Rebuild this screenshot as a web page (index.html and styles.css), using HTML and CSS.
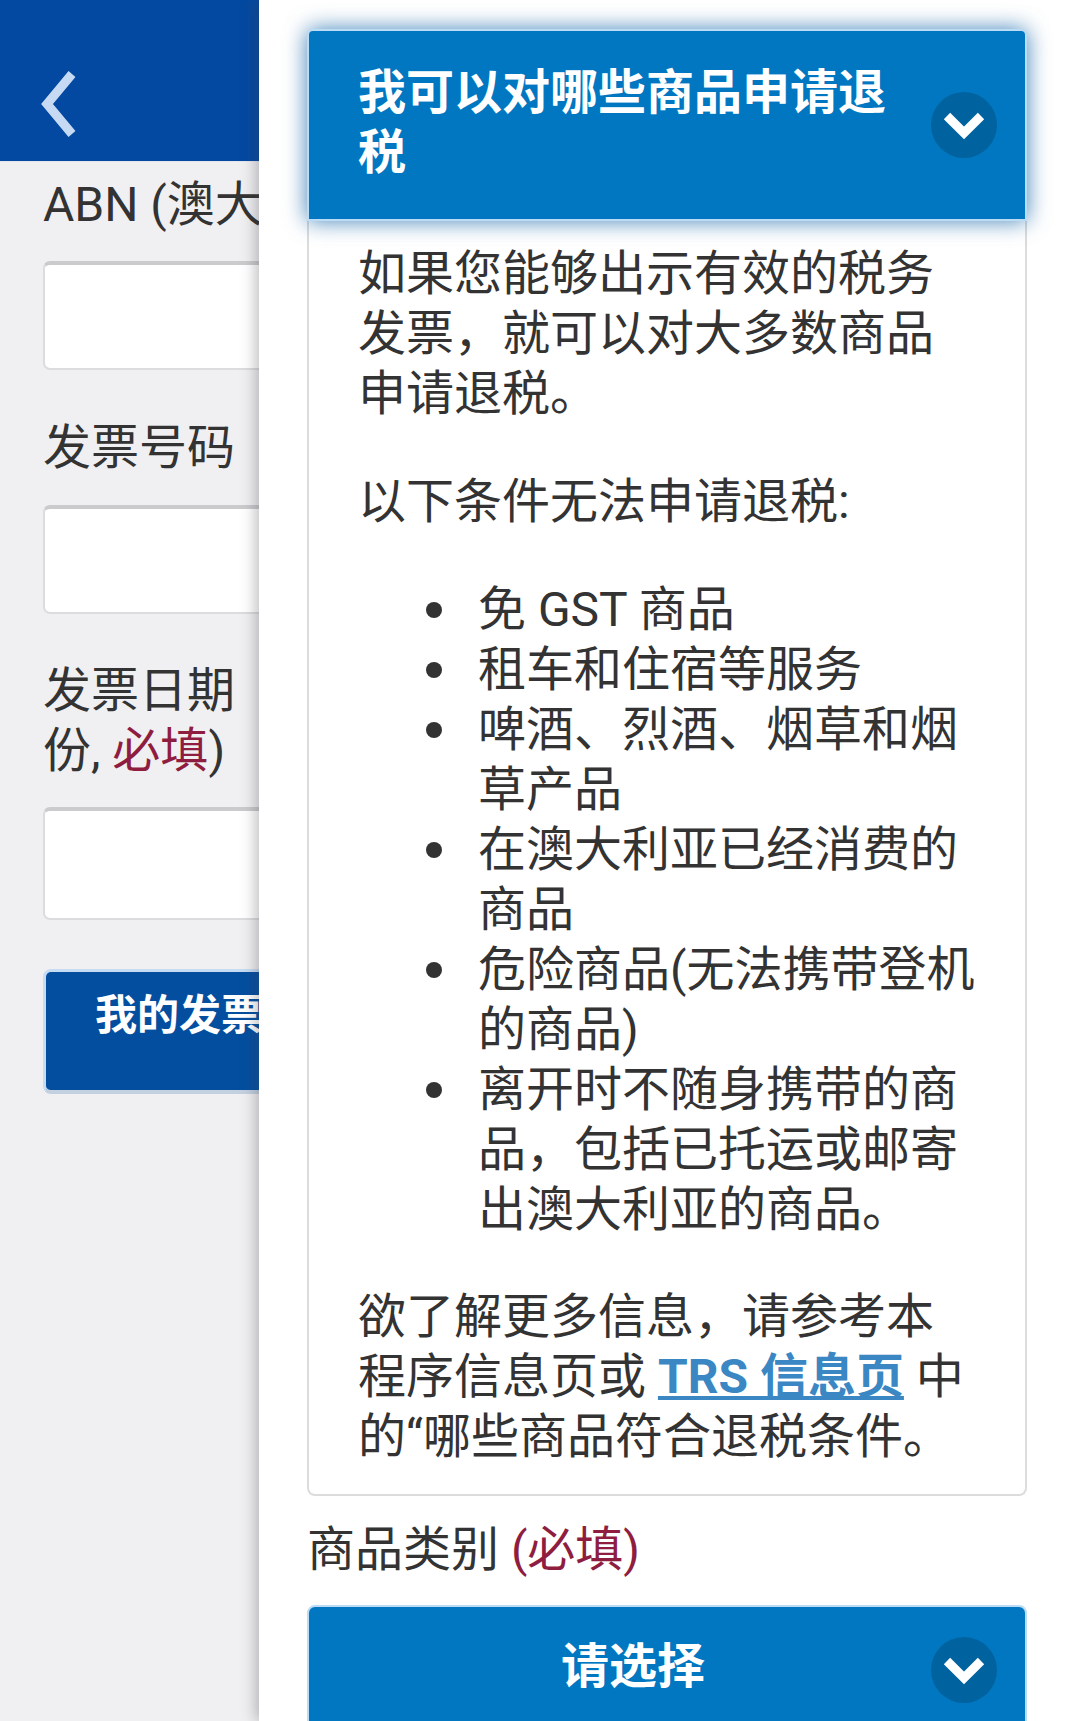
FILE: index.html
```html
<!DOCTYPE html>
<html lang="zh-CN">
<head>
<meta charset="utf-8">
<title>退税申请</title>
<link rel="stylesheet" href="styles.css">
</head>
<body>
<div class="app">
  <section class="form-view">
    <header class="topbar">
      <svg class="back" width="42" height="74" viewBox="0 0 42 74"><polyline points="35,7 10,37 35,67"/></svg>
    </header>
    <div class="form">
      <div class="label nowrap">ABN (澳大</div>
      <div class="input"></div>
      <div class="label">发票号码</div>
      <div class="input"></div>
      <div class="label">发票日期<br>份, <span class="req">必填</span>)</div>
      <div class="input input-tall"></div>
      <div class="btn">我的发票</div>
    </div>
  </section>
  <main class="panel">
    <article class="card">
      <div class="card-head">
        <h2 class="card-title">我可以对哪些商品申请退税</h2>
        <span class="round"><svg class="chev" width="44" height="30" viewBox="0 0 44 30"><polyline points="5,6 22,23 39,6"/></svg></span>
      </div>
      <div class="card-body">
        <p>如果您能够出示有效的税务发票，就可以对大多数商品申请退税。</p>
        <p>以下条件无法申请退税:</p>
        <ul>
          <li>免 GST 商品</li>
          <li>租车和住宿等服务</li>
          <li>啤酒、烈酒、烟草和烟草产品</li>
          <li>在澳大利亚已经消费的商品</li>
          <li>危险商品(无法携带登机的商品)</li>
          <li>离开时不随身携带的商品，包括已托运或邮寄出澳大利亚的商品。</li>
        </ul>
        <p>欲了解更多信息，请参考本程序信息页或 <a href="#">TRS 信息页</a> 中的“哪些商品符合退税条件。</p>
      </div>
    </article>
    <div class="label cat-label">商品类别 <span class="req">(必填)</span></div>
    <div class="select">
      <span class="select-text">请选择</span>
      <span class="round"><svg class="chev" width="44" height="30" viewBox="0 0 44 30"><polyline points="5,6 22,23 39,6"/></svg></span>
    </div>
  </main>
</div>
</body>
</html>
```
FILE: styles.css
```css
* { box-sizing: border-box; }
html, body { margin: 0; padding: 0; }
body {
  width: 1075px;
  height: 1721px;
  overflow: hidden;
  background: #f0f0f2;
  color: #333;
  font-family: Roboto, "Noto Sans CJK SC", sans-serif;
  font-size: 48px;
  line-height: 60px;
}
.app { display: flex; height: 1721px; }

.form-view { width: 259px; flex: none; overflow: hidden; }
.topbar {
  height: 162px;
  background: #0449a1;
  padding: 67px 0 0 37px;
  border-bottom: 1px solid #e4e6ec;
}
.back { display: block; fill: none; stroke: #c7daf3; stroke-width: 9; }
.form { width: 500px; padding: 13px 0 0 43px; }
.label { color: #333; }
.nowrap { white-space: nowrap; }
.req { color: #8f1d3f; }
.input {
  height: 109px;
  margin: 26px 0 48px;
  background: #fff;
  border: 2px solid #dcdcdf;
  border-top: 4px solid #cbcbce;
  border-radius: 7px;
}
.input + .label + .input { margin-top: 27px; margin-bottom: 47px; }
.input + .label + .input.input-tall { height: 113px; margin-top: 26px; margin-bottom: 49px; }
.btn {
  height: 125px;
  padding: 14px 0 0 49px;
  background: #044ea0;
  border: 3px solid #c5dcf4;
  border-bottom: 4px solid #c3d0e0;
  border-radius: 8px;
  color: #fff;
  font-size: 42px;
  font-weight: 700;
  white-space: nowrap;
}

.panel {
  flex: 1;
  position: relative;
  z-index: 1;
  background: #fff;
  box-shadow: -3px 0 14px rgba(60, 60, 70, 0.35);
  padding: 29px 48px 0 48px;
  overflow: hidden;
}
.card { background: #fff; }
.card-head {
  position: relative;
  display: flex;
  align-items: center;
  height: 192px;
  padding: 0 28px 0 49px;
  background: #0077c0;
  border: 2px solid #bcdcf5;
  border-radius: 6px 6px 0 0;
  box-shadow: 0 0 22px rgba(0, 90, 160, 0.75);
}
.card-title {
  flex: 1;
  margin: 0 24px 4px 0;
  color: #fff;
  font-size: 48px;
  line-height: 60px;
  font-weight: 700;
}
.round {
  display: flex;
  flex: none;
  align-items: center;
  justify-content: center;
  width: 66px;
  height: 66px;
  border-radius: 50%;
  background: #00629f;
}
.chev { display: block; fill: none; stroke: #fff; stroke-width: 9; }
.card-body {
  padding: 23px 50px 27px 49px;
  border: 2px solid #dcdcdc;
  border-top: 0;
  border-radius: 0 0 8px 8px;
}
.card-body p { margin: 0 0 48px; }
.card-body p:last-child { margin: 0; }
.card-body ul { margin: 0 0 47px; padding-left: 120px; list-style: none; }
.card-body li { position: relative; }
.card-body li::before {
  content: "";
  position: absolute;
  left: -52px;
  top: 22px;
  width: 16px;
  height: 16px;
  border-radius: 50%;
  background: #333;
}
.card-body a { color: #3a87c4; font-weight: 700; }
.cat-label { margin-top: 24px; }
.select {
  display: flex;
  align-items: flex-start;
  height: 122px;
  margin-top: 25px;
  padding: 30px 28px 0 26px;
  background: #0077c0;
  border: 2px solid #bcdcf5;
  border-radius: 8px 8px 0 0;
}
.select-text {
  flex: 1;
  color: #fff;
  font-weight: 700;
  text-align: center;
}
```
